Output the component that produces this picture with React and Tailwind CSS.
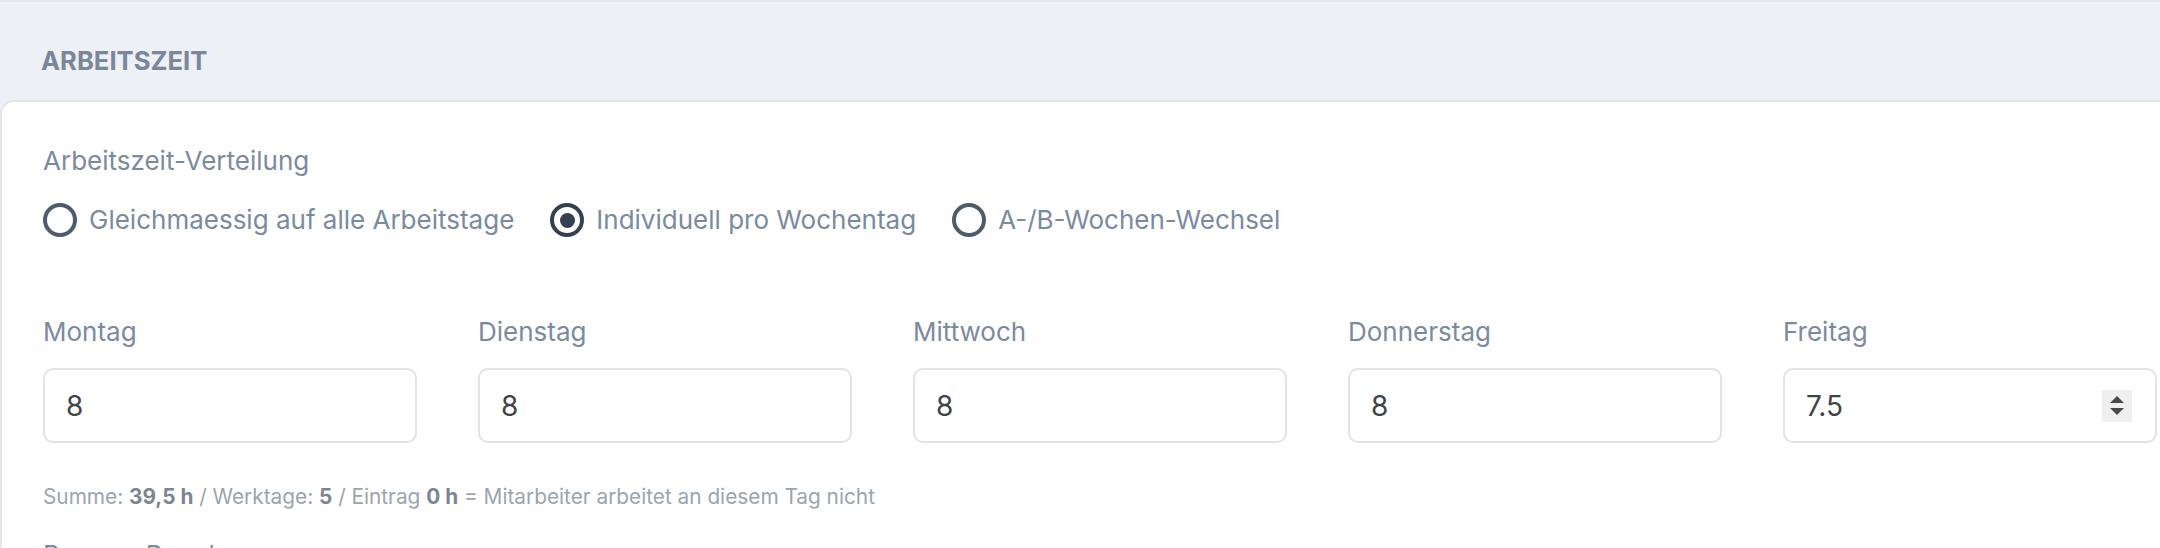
import React from 'react';

const days = [
  { name: 'Montag', value: '8' },
  { name: 'Dienstag', value: '8' },
  { name: 'Mittwoch', value: '8' },
  { name: 'Donnerstag', value: '8' },
  { name: 'Freitag', value: '7.5', spinner: true },
];

const modes = [
  { label: 'Gleichmaessig auf alle Arbeitstage', checked: false },
  { label: 'Individuell pro Wochentag', checked: true },
  { label: 'A-/B-Wochen-Wechsel', checked: false },
];

function Radio({ checked }) {
  return (
    <span
      className={`flex h-[34px] w-[34px] shrink-0 items-center justify-center rounded-full border-[4px] ${
        checked ? 'border-[#334155]' : 'border-[#4d5b6c]'
      }`}
    >
      {checked && <span className="h-[15px] w-[15px] rounded-full bg-[#334155]" />}
    </span>
  );
}

export default function App() {
  return (
    <div className="h-[548px] w-[2160px] overflow-hidden border-t-2 border-[#e3e7ed] bg-[#edf0f5] font-['Inter','Liberation_Sans',sans-serif]">

      {/* Section header */}
      <div className="pl-[41px] pt-[43px] pb-[23px]">
        <h2 className="text-[25.6px] font-bold leading-[32px] text-[#7a879a]">ARBEITSZEIT</h2>
      </div>

      {/* Card */}
      <div className="h-full rounded-tl-[14px] border-l-2 border-t-2 border-[#e3e7ed] bg-white pl-[41px] pr-[3px] pt-[42px]">

        {/* Distribution */}
        <p className="text-[26px] leading-[34px] text-[#7a8ba1]">Arbeitszeit-Verteilung</p>
        <div className="mt-[25px] flex items-center gap-[36px]">
          {modes.map((m) => (
            <label key={m.label} className="flex items-center gap-[12px]">
              <Radio checked={m.checked} />
              <span className="text-[26px] leading-[34px] text-[#7a8ba1]">{m.label}</span>
            </label>
          ))}
        </div>

        {/* Weekdays */}
        <div className="mt-[78px] grid grid-cols-5 gap-x-[61px]">
          {days.map((d) => (
            <div key={d.name}>
              <p className="text-[26px] leading-[34px] text-[#7a8ba1]">{d.name}</p>
              <div className="mt-[19px] flex h-[75px] items-center justify-between rounded-[10px] border-2 border-[#e0e3e7] pl-[21px] pr-[23px]">
                <span className="text-[28px] text-[#3f444b]">{d.value}</span>
                {d.spinner && (
                  <span className="flex h-[32px] w-[30px] flex-col items-center justify-center gap-[5px] bg-[#efefef]">
                    <svg width="14" height="7" viewBox="0 0 14 7"><path d="M7 0L14 7H0z" fill="#4a4a4a" /></svg>
                    <svg width="14" height="7" viewBox="0 0 14 7"><path d="M0 0H14L7 7z" fill="#4a4a4a" /></svg>
                  </span>
                )}
              </div>
            </div>
          ))}
        </div>

        <p className="mt-[40px] text-[20.8px] leading-[28px] text-[#9aa5af]">
          Summe: <b className="font-bold text-[#7b8692]">39,5 h</b> / Werktage: <b className="font-bold text-[#7b8692]">5</b> / Eintrag{' '}
          <b className="font-bold text-[#7b8692]">0 h</b> = Mitarbeiter arbeitet an diesem Tag nicht
        </p>

        <p className="mt-[27px] text-[26px] leading-[34px] text-[#7a8ba1]">Pausen-Regelung</p>
      </div>
    </div>
  );
}
